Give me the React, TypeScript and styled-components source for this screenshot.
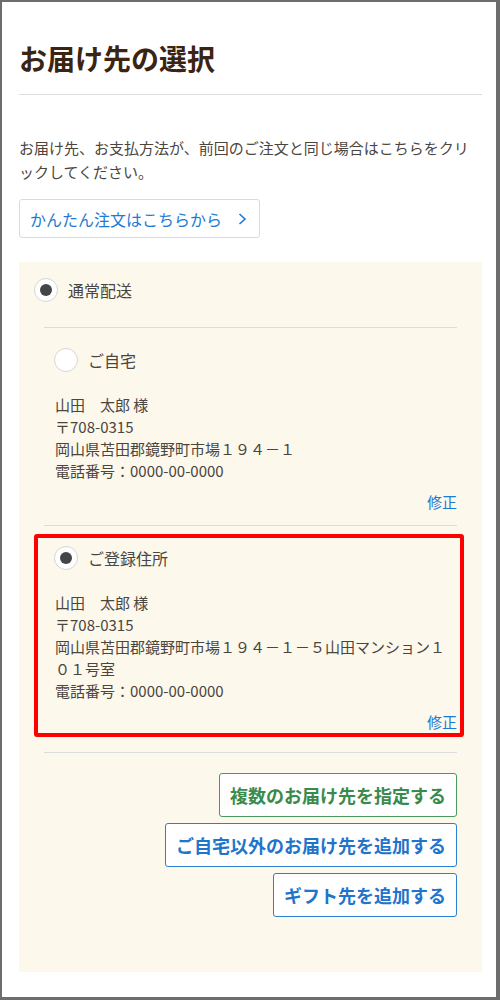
import React from "react";
import styled, { createGlobalStyle } from "styled-components";

const Global = createGlobalStyle`
  html, body { margin: 0; padding: 0; background: #fff; }
  body { font-family: "Noto Sans CJK JP", "Noto Sans", sans-serif; }
  * { box-sizing: border-box; }
`;

const Frame = styled.div`
  width: 500px;
  height: 1000px;
  border-style: solid;
  border-color: #6d6d6d;
  border-width: 2px 4px 3px 2px;
  padding: 0 14px 0 17px;
  background: #fff;
  color: #4b4540;
  overflow: hidden;
`;

const TitleBar = styled.div`
  padding: 36px 0 16px;
  border-bottom: 1px solid #dcdcdc;
`;

const Title = styled.h1`
  margin: 0;
  font-size: 28px;
  line-height: 40px;
  font-weight: 700;
  color: #3b2412;
`;

const Lead = styled.p`
  margin: 41px 0 0;
  font-size: 15px;
  line-height: 24px;
`;

const QuickButton = styled.button`
  margin-top: 15px;
  height: 39px;
  display: inline-flex;
  align-items: center;
  gap: 16px;
  padding: 0 12px 0 10px;
  background: #fff;
  border: 1px solid #dadada;
  border-radius: 3px;
  font-family: inherit;
  font-size: 16px;
  color: #1f7ad4;
  cursor: pointer;
`;

const Panel = styled.section`
  margin-top: 24px;
  background: #fcf8ec;
  padding: 16px 0 55px;
`;

const RadioRow = styled.label<{ $indent?: number }>`
  display: flex;
  align-items: center;
  gap: 10px;
  padding-left: ${(p) => p.$indent ?? 0}px;
  font-size: 16px;
  line-height: 24px;
  color: #4b4540;
`;

const RadioCircle = styled.span<{ $checked?: boolean }>`
  width: 24px;
  height: 24px;
  border-radius: 50%;
  background: #fff;
  border: 1px solid #d6d6d6;
  display: flex;
  align-items: center;
  justify-content: center;
  flex: none;
  &::after {
    content: "";
    width: 12px;
    height: 12px;
    border-radius: 50%;
    background: ${(p) => (p.$checked ? "#454545" : "transparent")};
  }
`;

const List = styled.div`
  margin: 25px 25px 0;
  border-bottom: 1px solid #dcdcdc;
`;

const Item = styled.div<{ $extra?: number }>`
  position: relative;
  border-top: 1px solid #dcdcdc;
  padding: 20px 0 ${(p) => 12 + (p.$extra ?? 0)}px 10px;
`;

const Address = styled.div`
  margin-top: 22px;
  padding-left: 1px;
  font-size: 15px;
  line-height: 22px;
`;

const EditLink = styled.a`
  display: block;
  margin-top: 9px;
  text-align: right;
  font-size: 15px;
  line-height: 22px;
  color: #1f7ad4;
  text-decoration: none;
`;

const Highlight = styled.div`
  position: absolute;
  top: 8px;
  bottom: 15px;
  left: -10px;
  right: -7px;
  border: 4px solid #ff0000;
  border-radius: 3px;
  pointer-events: none;
`;

const Actions = styled.div`
  margin: 20px 25px 0;
  display: flex;
  flex-direction: column;
  align-items: flex-end;
  gap: 6px;
`;

const ActionButton = styled.button<{ $tone: "green" | "blue" }>`
  height: 44px;
  padding: 0 10px;
  background: #fff;
  border: 1px solid ${(p) => (p.$tone === "green" ? "#4a9a5e" : "#2c7fd2")};
  border-radius: 3px;
  font-family: inherit;
  font-size: 18px;
  font-weight: 700;
  color: ${(p) => (p.$tone === "green" ? "#3a8a4c" : "#1f74cc")};
  cursor: pointer;
`;

const Chevron = () => (
  <svg width="9" height="12" viewBox="0 0 9 12" fill="none">
    <path d="M1.5 1 L7 6 L1.5 11" stroke="#1f7ad4" strokeWidth="1.6" />
  </svg>
);

type Addr = { label: string; lines: string[]; checked?: boolean; highlight?: boolean };

const addresses: Addr[] = [
  {
    label: "ご自宅",
    lines: ["山田　太郎 様", "〒708-0315", "岡山県苫田郡鏡野町市場１９４－１", "電話番号：0000-00-0000"],
  },
  {
    label: "ご登録住所",
    checked: true,
    highlight: true,
    lines: [
      "山田　太郎 様",
      "〒708-0315",
      "岡山県苫田郡鏡野町市場１９４－１－５山田マンション１０１号室",
      "電話番号：0000-00-0000",
    ],
  },
];

export default function App() {
  return (
    <>
      <Global />
      <Frame>
        <TitleBar>
          <Title>お届け先の選択</Title>
        </TitleBar>
        <Lead>お届け先、お支払方法が、前回のご注文と同じ場合はこちらをクリックしてください。</Lead>
        <QuickButton>
          かんたん注文はこちらから
          <Chevron />
        </QuickButton>
        <Panel>
          <RadioRow $indent={15}>
            <RadioCircle $checked />
            通常配送
          </RadioRow>
          <List>
            {addresses.map((a) => (
              <Item key={a.label} $extra={a.highlight ? 7 : 0}>
                <RadioRow>
                  <RadioCircle $checked={a.checked} />
                  {a.label}
                </RadioRow>
                <Address>
                  {a.lines.map((l) => (
                    <div key={l}>{l}</div>
                  ))}
                </Address>
                <EditLink href="#">修正</EditLink>
                {a.highlight && <Highlight />}
              </Item>
            ))}
          </List>
          <Actions>
            <ActionButton $tone="green">複数のお届け先を指定する</ActionButton>
            <ActionButton $tone="blue">ご自宅以外のお届け先を追加する</ActionButton>
            <ActionButton $tone="blue">ギフト先を追加する</ActionButton>
          </Actions>
        </Panel>
      </Frame>
    </>
  );
}
